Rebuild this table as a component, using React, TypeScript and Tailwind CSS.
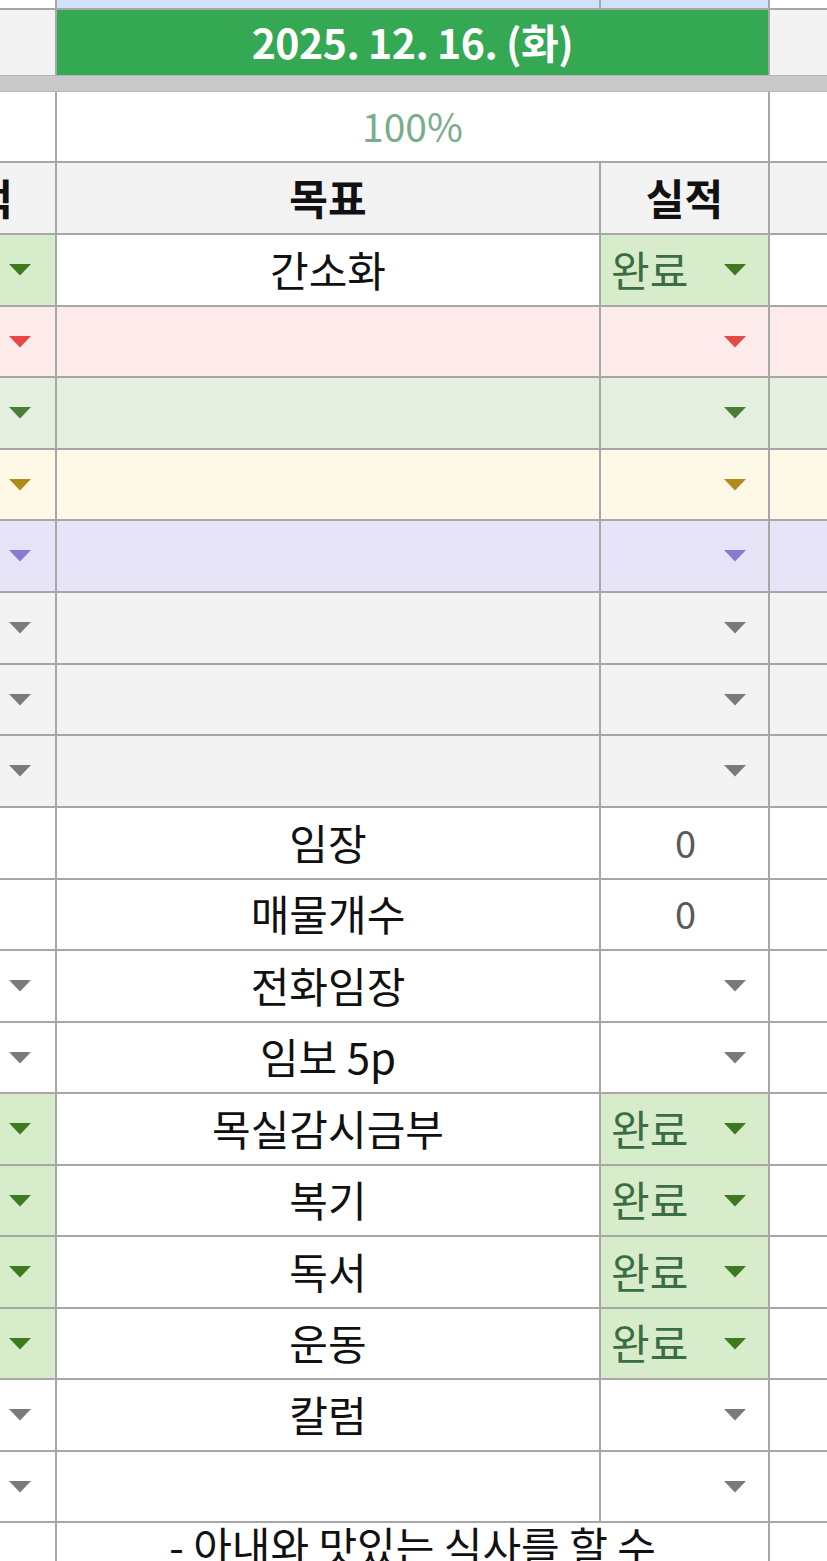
import React from "react";

type Tone = "done" | "pink" | "green" | "yellow" | "purple" | "grey" | "plain" | "none";

interface Row {
  target: string;
  tone: Tone;
  value?: string;
  h: string;
}

const TONES: Record<Tone, { left: string; mid: string; status: string; right: string; arrow: string; showArrow: boolean }> = {
  done: { left: "bg-[#d7ecca]", mid: "bg-white", status: "bg-[#d7ecca]", right: "bg-white", arrow: "fill-[#3d7a1f]", showArrow: true },
  pink: { left: "bg-[#fdeaea]", mid: "bg-[#fdeaea]", status: "bg-[#fdeaea]", right: "bg-[#fdeaea]", arrow: "fill-[#e54848]", showArrow: true },
  green: { left: "bg-[#e5efdf]", mid: "bg-[#e5efdf]", status: "bg-[#e5efdf]", right: "bg-[#e5efdf]", arrow: "fill-[#4a7d35]", showArrow: true },
  yellow: { left: "bg-[#fef8e6]", mid: "bg-[#fef8e6]", status: "bg-[#fef8e6]", right: "bg-[#fef8e6]", arrow: "fill-[#b08a1a]", showArrow: true },
  purple: { left: "bg-[#e8e4f7]", mid: "bg-[#e8e4f7]", status: "bg-[#e8e4f7]", right: "bg-[#e8e4f7]", arrow: "fill-[#8c7ad0]", showArrow: true },
  grey: { left: "bg-[#f3f3f3]", mid: "bg-[#f3f3f3]", status: "bg-[#f3f3f3]", right: "bg-[#f3f3f3]", arrow: "fill-[#7a7a7a]", showArrow: true },
  plain: { left: "bg-white", mid: "bg-white", status: "bg-white", right: "bg-white", arrow: "fill-[#7a7a7a]", showArrow: true },
  none: { left: "bg-white", mid: "bg-white", status: "bg-white", right: "bg-white", arrow: "fill-[#7a7a7a]", showArrow: false },
};

const ROWS: Row[] = [
  { target: "간소화", tone: "done", value: "완료", h: "h-[70px]" },
  { target: "", tone: "pink", h: "h-[69px]" },
  { target: "", tone: "green", h: "h-[70px]" },
  { target: "", tone: "yellow", h: "h-[69px]" },
  { target: "", tone: "purple", h: "h-[70px]" },
  { target: "", tone: "grey", h: "h-[70px]" },
  { target: "", tone: "grey", h: "h-[69px]" },
  { target: "", tone: "grey", h: "h-[70px]" },
  { target: "임장", tone: "none", value: "0", h: "h-[70px]" },
  { target: "매물개수", tone: "none", value: "0", h: "h-[69px]" },
  { target: "전화임장", tone: "plain", h: "h-[70px]" },
  { target: "임보 5p", tone: "plain", h: "h-[69px]" },
  { target: "목실감시금부", tone: "done", value: "완료", h: "h-[70px]" },
  { target: "복기", tone: "done", value: "완료", h: "h-[69px]" },
  { target: "독서", tone: "done", value: "완료", h: "h-[70px]" },
  { target: "운동", tone: "done", value: "완료", h: "h-[69px]" },
  { target: "칼럼", tone: "plain", h: "h-[70px]" },
  { target: "", tone: "plain", h: "h-[69px]" },
];

const FONT = { fontFamily: '"Noto Sans CJK KR", "Noto Sans", sans-serif' };

function Arrow({ color }: { color: string }) {
  return (
    <svg width="22" height="12" viewBox="0 0 22 12" className={color}>
      <polygon points="0,0 22,0 11,11.5" />
    </svg>
  );
}

const GRID = "grid grid-cols-[55px_542px_167px_1fr] gap-x-[2px]";

function DataRow({ row }: { row: Row }) {
  const t = TONES[row.tone];
  return (
    <div className={`${GRID} ${row.h}`}>
      <div className={`${t.left} flex items-center pl-[9px]`}>
        {t.showArrow && <Arrow color={t.arrow} />}
      </div>
      <div className={`${t.mid} flex items-center justify-center pb-[3px] text-[42px] text-[#111]`}>{row.target}</div>
      <div className={`${t.status} flex items-center`}>
        {row.value === "완료" && <span className="pb-[3px] pl-[10px] text-[42px] text-[#3a6d44]">완료</span>}
        {row.value === "0" && <span className="w-full pb-[3px] pl-[2px] text-center text-[38px] text-[#5a5a5a]">0</span>}
        {t.showArrow && (
          <span className="ml-auto mr-[22px] flex">
            <Arrow color={t.arrow} />
          </span>
        )}
      </div>
      <div className={t.right} />
    </div>
  );
}

export default function App() {
  return (
    <div className="h-[1561px] w-[827px] overflow-hidden bg-[#a7a7a7] leading-none" style={FONT}>
      {/* frozen top */}
      <div className="flex flex-col gap-y-[2px]">
        <div className={`${GRID} h-[8px]`}>
          <div className="bg-white" />
          <div className="bg-[#d3e2fb]" />
          <div className="bg-[#d3e2fb]" />
          <div className="bg-white" />
        </div>
        <div className={`${GRID} h-[65px]`}>
          <div className="bg-[#f3f3f3]" />
          <div className="col-span-2 flex items-center justify-center bg-[#34a853] pb-[3px] text-[41px] font-bold tracking-[-0.5px] text-white">
            2025. 12. 16. (화)
          </div>
          <div className="bg-[#f3f3f3]" />
        </div>
      </div>
      <div className="h-[17px] border-y border-[#b5b5b5] bg-[#c9c9c9]" />

      {/* body */}
      <div className="flex flex-col gap-y-[2px]">
        <div className={`${GRID} h-[69px]`}>
          <div className="bg-white" />
          <div className="col-span-2 flex items-center justify-center bg-white pb-[3px] text-[39px] text-[#79ad8b]">100%</div>
          <div className="bg-white" />
        </div>
        <div className={`${GRID} h-[70px]`}>
          <div className="flex items-center justify-end overflow-hidden bg-[#f3f3f3] pb-[3px]">
            <span className="mr-[42px] whitespace-nowrap text-[42px] font-bold text-[#111]">실적</span>
          </div>
          <div className="flex items-center justify-center bg-[#f3f3f3] pb-[3px] text-[42px] font-bold text-[#111]">목표</div>
          <div className="flex items-center justify-center bg-[#f3f3f3] pb-[3px] text-[42px] font-bold text-[#111]">실적</div>
          <div className="bg-[#f3f3f3]" />
        </div>
        {ROWS.map((r, i) => (
          <DataRow key={i} row={r} />
        ))}
        <div className={`${GRID} h-[200px]`}>
          <div className="bg-white" />
          <div className="col-span-2 bg-white pt-[1px] text-center text-[42px] text-[#111]">- 아내와 맛있는 식사를 할 수</div>
          <div className="bg-white" />
        </div>
      </div>
    </div>
  );
}
